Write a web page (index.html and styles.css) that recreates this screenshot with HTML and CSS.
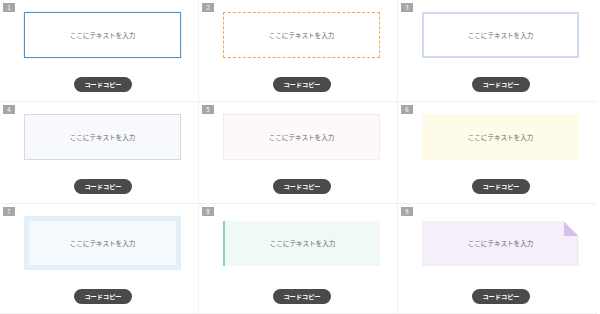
FILE: index.html
```html
<!DOCTYPE html>
<html lang="ja">
<head>
    <meta charset="UTF-8">
    <meta name="viewport" content="width=device-width, initial-scale=1.0">
    <title>Box Samples</title>
    <link rel="stylesheet" href="styles.css">
</head>
<body>
    <div class="sample-grid">
        <div class="sample-cell">
            <span class="num">1</span>
            <div class="preview"><div class="box box-1">ここにテキストを入力</div></div>
            <button class="copy-btn">コードコピー</button>
        </div>
        <div class="sample-cell">
            <span class="num">2</span>
            <div class="preview"><div class="box box-2">ここにテキストを入力</div></div>
            <button class="copy-btn">コードコピー</button>
        </div>
        <div class="sample-cell">
            <span class="num">3</span>
            <div class="preview"><div class="box box-3">ここにテキストを入力</div></div>
            <button class="copy-btn">コードコピー</button>
        </div>

        <div class="sample-cell">
            <span class="num">4</span>
            <div class="preview"><div class="box box-4">ここにテキストを入力</div></div>
            <button class="copy-btn">コードコピー</button>
        </div>
        <div class="sample-cell">
            <span class="num">5</span>
            <div class="preview"><div class="box box-5">ここにテキストを入力</div></div>
            <button class="copy-btn">コードコピー</button>
        </div>
        <div class="sample-cell">
            <span class="num">6</span>
            <div class="preview"><div class="box box-6">ここにテキストを入力</div></div>
            <button class="copy-btn">コードコピー</button>
        </div>

        <div class="sample-cell">
            <span class="num">7</span>
            <div class="preview"><div class="box box-7">ここにテキストを入力</div></div>
            <button class="copy-btn">コードコピー</button>
        </div>
        <div class="sample-cell">
            <span class="num">8</span>
            <div class="preview"><div class="box box-8">ここにテキストを入力</div></div>
            <button class="copy-btn">コードコピー</button>
        </div>
        <div class="sample-cell">
            <span class="num">9</span>
            <div class="preview"><div class="box box-9">ここにテキストを入力</div></div>
            <button class="copy-btn">コードコピー</button>
        </div>
    </div>
</body>
</html>
```

FILE: styles.css
```css
body {
    margin: 0;
    padding: 0;
    background: #fff;
    font-family: "Noto Sans CJK JP", "Noto Sans", sans-serif;
}

.sample-grid {
    display: grid;
    grid-template-columns: repeat(3, 199px);
}

.sample-cell {
    position: relative;
    display: flex;
    flex-direction: column;
    padding: 12px 0 9px 24px;
    border-right: 1px solid #f2f2f2;
    border-bottom: 1px solid #f0f0f0;
}

.sample-cell:nth-child(3n) {
    border-right: none;
}

.num {
    position: absolute;
    top: 3px;
    left: 3px;
    width: 12px;
    height: 9px;
    background: #a6a6a6;
    color: #fff;
    font-size: 6px;
    line-height: 9px;
    text-align: center;
}

.preview {
    flex: 1;
    display: flex;
    align-items: center;
    width: 157px;
}

.box {
    position: relative;
    box-sizing: border-box;
    width: 157px;
    height: 46px;
    display: flex;
    align-items: center;
    justify-content: center;
    font-size: 6.6px;
    color: #666;
}

.box-1 {
    border: 1px solid #4f93c6;
    box-shadow: 0 0 1px rgba(79, 147, 198, 0.6);
}

.box-2 {
    border: 1px dashed #e6ad4c;
}

.box-3 {
    border: 2px solid #cfdcee;
}

.box-4 {
    background: #f7f9fd;
    border: 1px solid #d3dae6;
}

.box-5 {
    background: #fdf9fb;
    border: 1px dotted #e6d9e0;
}

.box-6 {
    background: #fffbe9;
}

.box-7 {
    height: 54px;
    background: #f5fafe;
    border: 5px solid #e1f0f9;
}

.box-8 {
    height: 45px;
    background: #f1f9f6;
    border-left: 2px solid #82d4b9;
}

.box-9 {
    height: 45px;
    background: #f5eff9;
}

.box-9::after {
    content: "";
    position: absolute;
    top: 0;
    right: 0;
    width: 15px;
    height: 15px;
    background: linear-gradient(to bottom left, #fff 50%, #d8c1e8 50%);
}

.copy-btn {
    align-self: flex-start;
    margin: 19px 0 0 50px;
    width: 58px;
    height: 15px;
    padding: 0;
    border: none;
    border-radius: 8px;
    background: #4a4a4a;
    color: #fff;
    font-family: inherit;
    font-size: 6.2px;
    font-weight: bold;
    line-height: 15px;
}
```
